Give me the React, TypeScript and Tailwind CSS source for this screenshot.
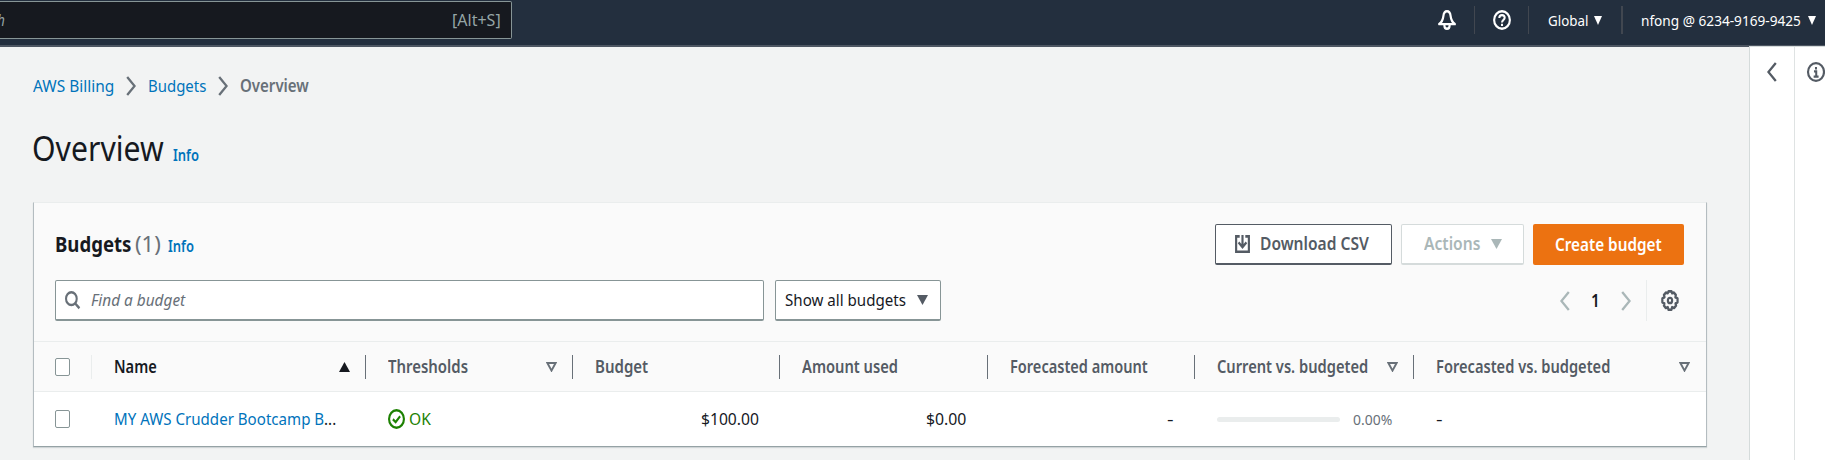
import { useLayoutEffect, useRef, type ReactNode } from "react";

/* Text condensed horizontally so that it fills the width of its box. */
function T({ className = "", children }: { className?: string; children: ReactNode }) {
  const box = useRef<HTMLSpanElement>(null);
  const ink = useRef<HTMLSpanElement>(null);
  useLayoutEffect(() => {
    if (box.current && ink.current) {
      const scale = box.current.clientWidth / ink.current.offsetWidth;
      ink.current.style.transform = `scaleX(${scale})`;
    }
  }, []);
  return (
    <span ref={box} className={`block shrink-0 whitespace-nowrap ${className}`}>
      <span ref={ink} className="inline-block origin-left">
        {children}
      </span>
    </span>
  );
}

function Icon({ className, children }: { className: string; children: ReactNode }) {
  return (
    <svg
      viewBox="0 0 16 16"
      preserveAspectRatio="none"
      fill="none"
      stroke="currentColor"
      strokeWidth="2"
      className={`block shrink-0 overflow-visible ${className}`}
    >
      {children}
    </svg>
  );
}

const Down = ({ className }: { className: string }) => (
  <Icon className={className}>
    <path d="M0 0h16L8 16z" fill="currentColor" stroke="none" />
  </Icon>
);

const SortDown = ({ className = "" }: { className?: string }) => (
  <svg viewBox="0 0 11 10" className={`block h-[10px] w-[11px] shrink-0 text-[#687078] ${className}`}>
    <path d="M1.4 1h8.2L5.5 8.6z" fill="none" stroke="currentColor" strokeWidth="1.9" />
  </svg>
);

const Chevron = ({ className }: { className: string }) => (
  <svg viewBox="0 0 10 20" className={`block h-[20px] w-[10px] shrink-0 ${className}`}>
    <path d="M1.2 1l7.4 9-7.4 9" fill="none" stroke="currentColor" strokeWidth="2.3" />
  </svg>
);

const Checkbox = () => (
  <span className="block h-[18px] w-[15px] rounded-[2px] border border-[#879596] bg-white" />
);

const COLS = "grid grid-cols-[58px_274px_207px_207px_208px_207px_219px_292px]";

function Head({ children, sort, last }: { children: ReactNode; sort?: ReactNode; last?: boolean }) {
  return (
    <div
      className={`flex h-[24px] items-center self-center pl-[22px] ${
        last ? "pr-[16px]" : "border-r border-[#687078] pr-[15px]"
      }`}
    >
      {children}
      <span className="grow" />
      {sort}
    </div>
  );
}

export default function App() {
  return (
    <div className="h-[466px] w-[1835px] overflow-hidden bg-white font-['Noto_Sans','Open_Sans',sans-serif] text-[17px] text-[#16191f]">
      <div className="flex h-[460px] w-[1825px] flex-col overflow-hidden bg-[#f2f3f3]">
        <header className="flex h-[47px] shrink-0 items-start border-b-2 border-[#4d5662] bg-[#232f3e] text-[15px] text-white">
          <div className="mt-px flex h-[38px] w-[512px] items-center justify-between rounded-r-[2px] border border-l-0 border-[#879596] bg-[#16191f] pr-[10px] text-[#95a5a6]">
            <T className="-ml-[3px] w-[8px] text-[17px] italic">h</T>
            <T className="w-[49px] text-[17px]">[Alt+S]</T>
          </div>
          <div className="grow" />
          <div className="flex h-[40px] items-center">
            <Icon className="mr-[18px] h-[20px] w-[18px]">
              <path
                d="M1 11.300H15C12.600 9.800 11.600 7.800 11.200 4.800C10.900 2.200 9.800 1 8 1S5.100 2.200 4.800 4.800C4.400 7.800 3.400 9.800 1 11.300zM5.700 11.800v.8c0 1.400 1 2.400 2.300 2.400s2.300-1 2.300-2.400v-.8"
                strokeLinejoin="round"
                strokeWidth="1.900"
              />
            </Icon>
            <span className="h-[28px] w-px bg-[#414750]" />
            <Icon className="ml-[18px] mr-[17px] h-[20px] w-[18px]">
              <circle cx="8" cy="8" r="7" strokeWidth="1.900" />
              <path d="M5.600 6.400C5.600 4.900 6.600 4 8 4s2.400.9 2.400 2.200C10.400 7.900 8 7.900 8 10M8 11v1.700" strokeWidth="1.800" />
            </Icon>
            <span className="h-[28px] w-px bg-[#414750]" />
            <T className="ml-[19px] w-[40px]">Global</T>
            <Down className="ml-[6px] h-[9px] w-[8px]" />
            <span className="ml-[19px] h-[28px] w-[2px] bg-[#414750]" />
            <T className="ml-[18px] w-[160px]">nfong @ 6234-9169-9425</T>
            <Down className="ml-[7px] mr-[9px] h-[9px] w-[8px]" />
          </div>
        </header>

        <div className="flex min-h-0 grow">
          <main className="w-[1750px] shrink-0 pl-[33px]">
            <nav className="mt-[27px] flex h-[24px] items-center text-[#0073bb]">
              <T className="w-[81px]">AWS Billing</T>
              <Chevron className="mx-[12px] text-[#687078]" />
              <T className="w-[58px]">Budgets</T>
              <Chevron className="mx-[12px] text-[#687078]" />
              <T className="w-[69px] font-semibold text-[#687078]">Overview</T>
            </nav>

            <div className="mt-[25px] flex h-[50px] items-baseline">
              <T className="-ml-px w-[132px] text-[35px] leading-[50px]">Overview</T>
              <T className="ml-[9px] w-[26px] text-[15.5px] font-semibold text-[#0073bb]">Info</T>
            </div>

            <section className="mt-[29px] h-[245px] w-[1674px] border border-t-[#eaeded] border-r-[#b4bcc0] border-b-[#95a2a5] border-l-[#b4bcc0] bg-white shadow-[0_1px_1px_#d0d5d7]">
              <div className="h-[139px] border-b border-[#eaeded] bg-[#fafafa] pl-[21px] pr-[22px] pt-[21px]">
                <div className="flex h-[41px] items-center font-semibold">
                  <div className="-mt-[2px] flex grow items-baseline">
                    <T className="w-[76px] text-[22px] font-bold">Budgets</T>
                    <T className="ml-[4px] w-[26px] text-[22px] font-normal text-[#687078]">(1)</T>
                    <T className="ml-[7px] w-[26px] text-[15.5px] text-[#0073bb]">Info</T>
                  </div>
                  <button className="flex h-[41px] w-[177px] items-center rounded-[2px] border border-b-2 border-[#545b64] bg-white pl-[19px] text-[#545b64]">
                    <Icon className="h-[18px] w-[15px]">
                      <path d="M5 1.200H1.200V14.900H14.800V1.200H11M8 0v10M3.800 6.500L8 10.800l4.200-4.300" strokeWidth="2.300" />
                    </Icon>
                    <T className="ml-[10px] w-[109px]">Download CSV</T>
                  </button>
                  <button className="ml-[9px] flex h-[41px] w-[123px] items-center rounded-[2px] border border-b-2 border-[#d5dbdb] bg-white pl-[22px] text-[#aab7b8]">
                    <T className="w-[56px]">Actions</T>
                    <Down className="ml-[11px] h-[10px] w-[11px]" />
                  </button>
                  <button className="ml-[9px] flex h-[41px] w-[151px] items-center rounded-[2px] bg-[#ec7211] pl-[22px] text-white">
                    <T className="w-[107px]">Create budget</T>
                  </button>
                </div>

                <div className="mt-[15px] flex h-[41px] items-center">
                  <div className="flex h-[41px] w-[709px] items-center rounded-[2px] border border-b-2 border-[#879596] bg-white pl-[9px] text-[#687078]">
                    <Icon className="h-[18px] w-[15px]">
                      <circle cx="6.800" cy="6.800" r="5.700" strokeWidth="2.200" />
                      <path d="M10.800 11L15.400 15.400" strokeWidth="2.400" />
                    </Icon>
                    <T className="ml-[11px] w-[94px] italic">Find a budget</T>
                  </div>
                  <div className="ml-[11px] flex h-[41px] w-[166px] items-center rounded-[2px] border border-b-2 border-[#879596] bg-white pl-[9px]">
                    <T className="w-[121px]">Show all budgets</T>
                    <Down className="ml-[11px] h-[10px] w-[11px] text-[#545b64]" />
                  </div>
                  <div className="grow" />
                  <Chevron className="rotate-180 text-[#aab7b8]" />
                  <T className="ml-[21px] w-[9px] font-semibold">1</T>
                  <Chevron className="ml-[21px] text-[#aab7b8]" />
                  <span className="ml-[15px] h-[41px] w-px bg-[#eaeded]" />
                  <Icon className="ml-[14px] mr-[5px] h-[21px] w-[18px] text-[#545b64]">
                    <path
                      d="M6.700 1h2.600l.6 1.500 1.600-.5 1.700 1.800-.4 1.700 1.900.9v3l-1.800.9.5 1.600-1.800 1.800-1.700-.6L9.300 15H6.700l-.7-1.900-1.700.6-1.700-1.800.4-1.600L1.200 9.400v-3L3.100 5.500l-.5-1.700L4.300 2l1.700.5z"
                      strokeLinejoin="round"
                      strokeWidth="2"
                    />
                    <ellipse cx="8" cy="8" rx="1.900" ry="2" strokeWidth="1.900" />
                  </Icon>
                </div>
              </div>

              <div className={`${COLS} h-[50px] overflow-hidden border-b border-[#eaeded] bg-[#fafafa] font-semibold text-[#545b64]`}>
                <div className="flex h-[24px] items-center self-center border-r border-[#eaeded] pl-[21px]">
                  <Checkbox />
                </div>
                <Head
                  sort={
                    <svg viewBox="0 0 11 10" className="block h-[10px] w-[11px] text-[#16191f]">
                      <path d="M5.500 0L11 10H0z" fill="currentColor" />
                    </svg>
                  }
                >
                  <T className="w-[43px] text-[#16191f]">Name</T>
                </Head>
                <Head sort={<SortDown />}>
                  <T className="w-[80px]">Thresholds</T>
                </Head>
                <Head>
                  <T className="w-[53px]">Budget</T>
                </Head>
                <Head>
                  <T className="w-[96px]">Amount used</T>
                </Head>
                <Head>
                  <T className="w-[138px]">Forecasted amount</T>
                </Head>
                <Head sort={<SortDown />}>
                  <T className="w-[151px]">Current vs. budgeted</T>
                </Head>
                <Head sort={<SortDown />} last>
                  <T className="w-[174px]">Forecasted vs. budgeted</T>
                </Head>
              </div>

              <div className={`${COLS} h-[54px] items-center`}>
                <div className="pl-[21px]">
                  <Checkbox />
                </div>
                <div className="pl-[22px]">
                  <T className="w-[222px]">
                    <span className="text-[#0073bb]">MY AWS Crudder Bootcamp B</span>...
                  </T>
                </div>
                <div className="flex items-center pl-[22px] text-[#1d8102]">
                  <Icon className="h-[20px] w-[17px]">
                    <circle cx="8" cy="8" r="7" />
                    <path d="M4.600 8.200L7.200 10.500L11.400 5.800" strokeWidth="1.900" />
                  </Icon>
                  <T className="ml-[4px] w-[22px]">OK</T>
                </div>
                <div className="flex justify-end pr-[21px]">
                  <T className="w-[58px]">$100.00</T>
                </div>
                <div className="flex justify-end pr-[22px]">
                  <T className="w-[40px]">$0.00</T>
                </div>
                <div className="flex justify-end pr-[22px]">
                  <T className="w-[6px]">-</T>
                </div>
                <div className="flex items-center pl-[22px]">
                  <span className="h-[5px] w-[123px] rounded-[3px] bg-[#eaeded]" />
                  <T className="ml-[13px] w-[39px] text-[15px] text-[#687078]">0.00%</T>
                </div>
                <div className="pl-[22px]">
                  <T className="w-[6px]">-</T>
                </div>
              </div>
            </section>
          </main>

          <aside className="flex grow bg-white pt-[15px] text-[#545b64] shadow-[0_0_0_1px_#d5dbdb]">
            <div className="-mt-[15px] w-[45px] border-r border-[#dfe3e3] pl-[17px] pt-[15px]">
              <Chevron className="rotate-180" />
            </div>
            <Icon className="ml-[12px] h-[20px] w-[18px]">
              <circle cx="8" cy="8" r="7.100" strokeWidth="1.900" />
              <path d="M8 4v1.900M6.200 7.500H8.200V11.400M5.900 11.600h4.400" strokeWidth="1.800" />
            </Icon>
          </aside>
        </div>
      </div>
    </div>
  );
}
